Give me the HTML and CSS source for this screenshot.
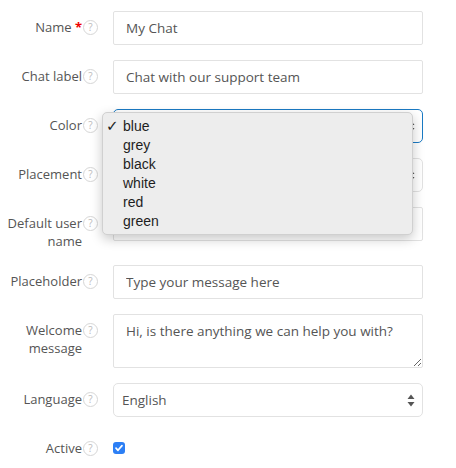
FILE: index.html
```html
<!DOCTYPE html>
<html>
<head>
<meta charset="utf-8">
<link rel="stylesheet" href="styles.css">
</head>
<body>
<form class="form">
  <div class="row">
    <div class="label"><span class="text">Name <span class="req">*</span></span><span class="help">?</span></div>
    <div class="control"><input class="input" type="text" value="My Chat"></div>
  </div>
  <div class="row">
    <div class="label"><span class="text">Chat label</span><span class="help">?</span></div>
    <div class="control"><input class="input" type="text" value="Chat with our support team"></div>
  </div>
  <div class="row">
    <div class="label"><span class="text">Color</span><span class="help">?</span></div>
    <div class="control">
      <div class="select focus">
        <svg class="arrows" width="8" height="13" viewBox="0 0 8 13"><path d="M4 0.5 L7.5 5 H0.5 Z M4 12.5 L7.5 8 H0.5 Z" fill="#555"/></svg>
      </div>
    </div>
  </div>
  <div class="row">
    <div class="label"><span class="text">Placement</span><span class="help">?</span></div>
    <div class="control">
      <div class="select">
        <svg class="arrows" width="8" height="13" viewBox="0 0 8 13"><path d="M4 0.5 L7.5 5 H0.5 Z M4 12.5 L7.5 8 H0.5 Z" fill="#555"/></svg>
      </div>
    </div>
  </div>
  <div class="row">
    <div class="label"><span class="text">Default user name</span><span class="help">?</span></div>
    <div class="control"><input class="input" type="text" value=""></div>
  </div>
  <div class="row">
    <div class="label"><span class="text">Placeholder</span><span class="help">?</span></div>
    <div class="control"><input class="input" type="text" value="Type your message here"></div>
  </div>
  <div class="row">
    <div class="label"><span class="text">Welcome message</span><span class="help">?</span></div>
    <div class="control"><textarea class="input area" rows="2">Hi, is there anything we can help you with?</textarea></div>
  </div>
  <div class="row">
    <div class="label"><span class="text">Language</span><span class="help">?</span></div>
    <div class="control">
      <div class="select"><span class="val">English</span>
        <svg class="arrows" width="8" height="13" viewBox="0 0 8 13"><path d="M4 0.5 L7.5 5 H0.5 Z M4 12.5 L7.5 8 H0.5 Z" fill="#555"/></svg>
      </div>
    </div>
  </div>
  <div class="row">
    <div class="label"><span class="text">Active</span><span class="help">?</span></div>
    <div class="control">
      <span class="check"><svg width="12" height="12" viewBox="0 0 12 12"><path d="M3 6.2 L5 8.3 L9 3.6" fill="none" stroke="#fff" stroke-width="1.7" stroke-linecap="round" stroke-linejoin="round"/></svg></span>
    </div>
  </div>

  <div class="menu">
    <div class="opt sel"><span class="tick">✓</span>blue</div>
    <div class="opt"><span class="tick"></span>grey</div>
    <div class="opt"><span class="tick"></span>black</div>
    <div class="opt"><span class="tick"></span>white</div>
    <div class="opt"><span class="tick"></span>red</div>
    <div class="opt"><span class="tick"></span>green</div>
  </div>
</form>
</body>
</html>
```
FILE: styles.css
```css
html, body {
  margin: 0;
  padding: 0;
  background: #fff;
}
.form {
  position: relative;
  padding-top: 11px;
  font-family: "Open Sans", sans-serif;
  color: #555;
}
.row {
  display: flex;
  align-items: flex-start;
  margin-bottom: 15px;
}
.label {
  width: 98px;
  display: flex;
  justify-content: flex-end;
  align-items: flex-start;
  padding-top: 7px;
  font-size: 13px;
  line-height: 18px;
  color: #555;
}
.text {
  max-width: 80px;
  text-align: right;
}
.req {
  color: #e00;
  font-weight: bold;
}
.help {
  box-sizing: border-box;
  flex: none;
  width: 15px;
  height: 15px;
  margin-left: 1px;
  margin-top: 2px;
  border: 1px solid #d6d6d6;
  border-radius: 50%;
  font-size: 10px;
  line-height: 13px;
  text-align: center;
  color: #bbb;
}
.control {
  margin-left: 15px;
  width: 310px;
}
.input {
  box-sizing: border-box;
  display: block;
  width: 310px;
  height: 34px;
  margin: 0;
  padding: 6px 12px;
  border: 1px solid #e2e2e2;
  border-radius: 2px;
  font-family: "Open Sans", sans-serif;
  font-size: 13.5px;
  line-height: 20px;
  color: #555;
  background: #fff;
  outline: none;
}
.area {
  height: 54px;
  resize: vertical;
  overflow: hidden;
}
.select {
  position: relative;
  box-sizing: border-box;
  height: 34px;
  padding: 6px 8px;
  border: 1px solid #e2e2e2;
  border-radius: 5px;
  font-size: 13.5px;
  line-height: 20px;
  color: #555;
  background: #fff;
}
.select.focus {
  border-color: #1a7ac4;
}
.arrows {
  position: absolute;
  right: 7px;
  top: 10px;
}
.check {
  display: block;
  width: 12px;
  height: 12px;
  margin-top: 10px;
  border-radius: 3px;
  background: #2c7ff5;
}
.check svg {
  display: block;
}
.menu {
  position: absolute;
  left: 102px;
  top: 112px;
  box-sizing: border-box;
  width: 311px;
  height: 123px;
  padding-top: 4px;
  background: #ededed;
  border: 1px solid #d0d0d0;
  border-radius: 5px;
  box-shadow: 0 4px 12px rgba(0, 0, 0, 0.22);
  font-family: "Liberation Sans", Arial, sans-serif;
  font-size: 14px;
  color: #1e1e1e;
}
.opt {
  display: flex;
  height: 19px;
  line-height: 19px;
}
.tick {
  width: 20px;
  padding-left: 3px;
  box-sizing: border-box;
  font-family: "DejaVu Sans", sans-serif;
  font-size: 15px;
  font-weight: bold;
}
```
